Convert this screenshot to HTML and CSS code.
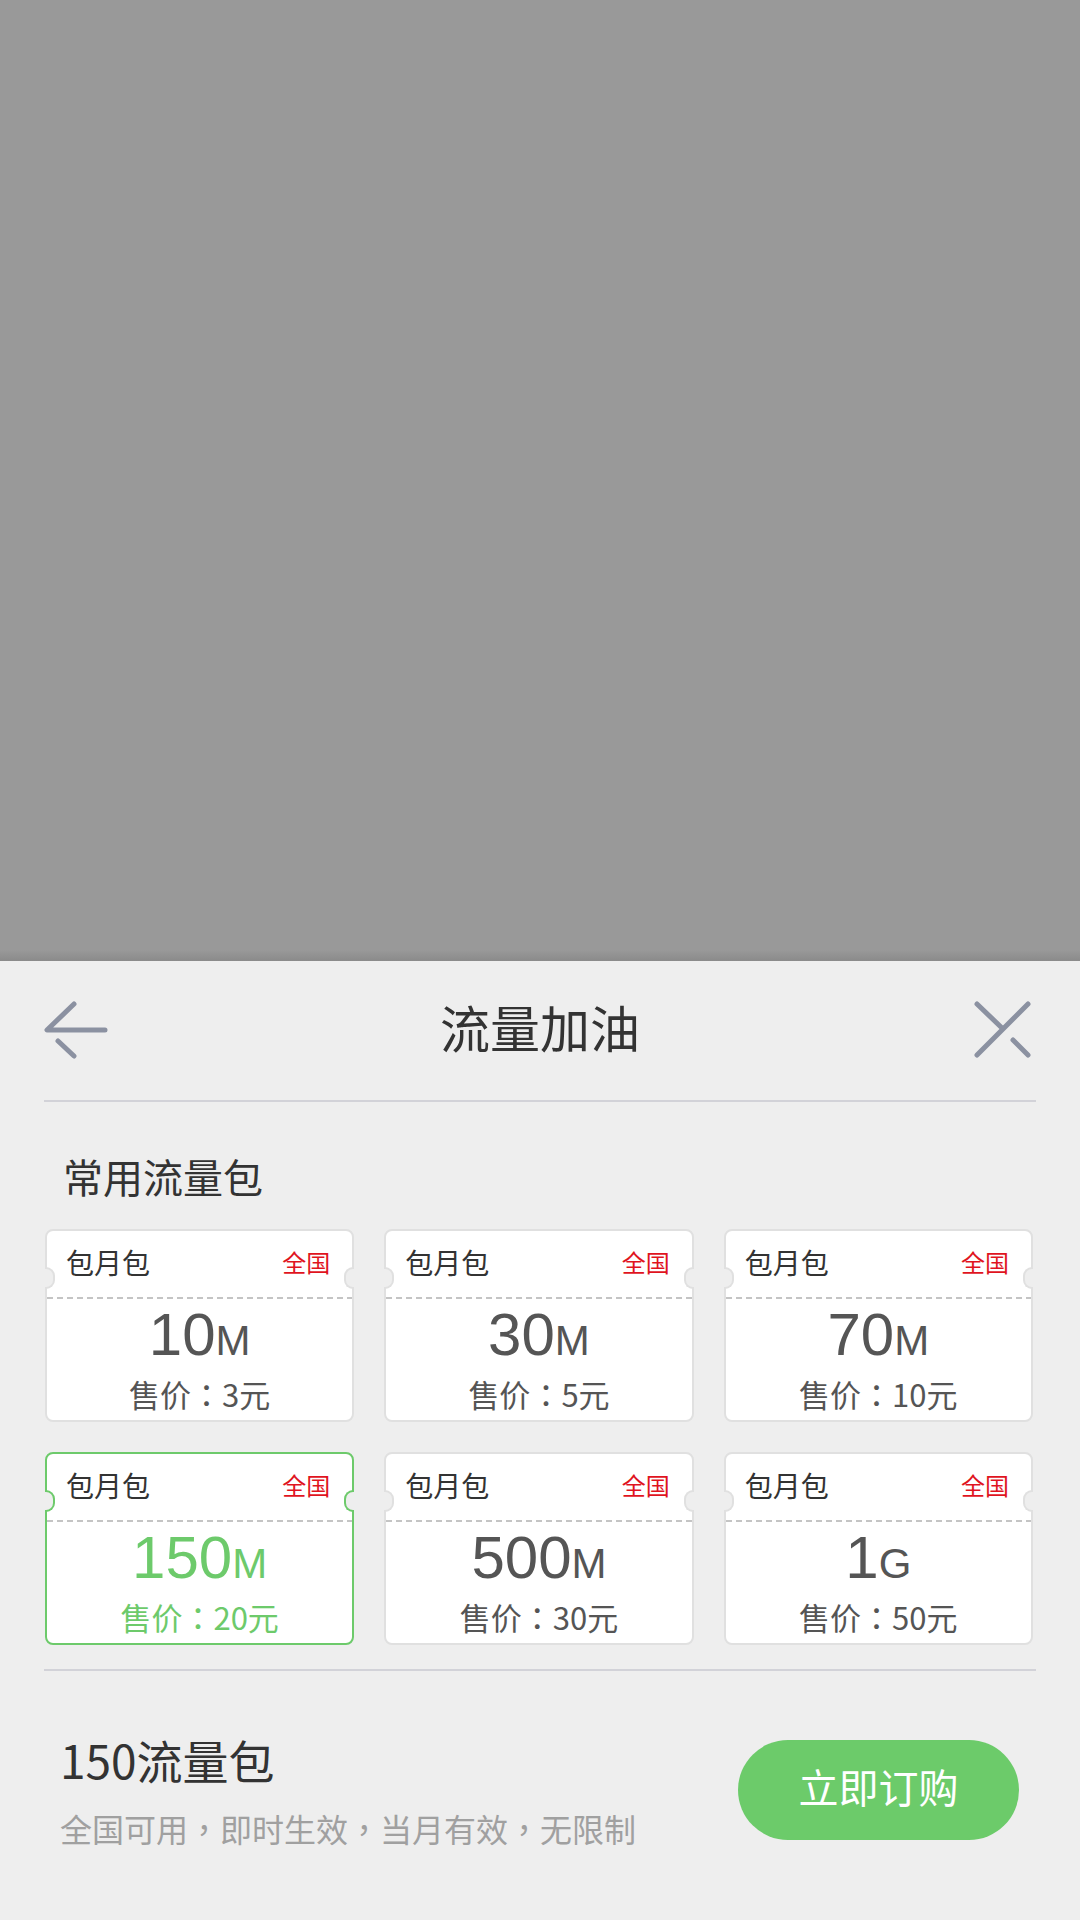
FILE: index.html
```html
<!DOCTYPE html>
<html lang="zh-CN">
<head>
<meta charset="utf-8">
<title>流量加油</title>
<link rel="stylesheet" href="styles.css">
</head>
<body>
<div class="overlay"></div>
<div class="panel">
  <div class="header">
    <svg class="icon" viewBox="0 0 64 64" width="64" height="64">
      <path d="M30 6 L3 32 L61 32 M14 43 L30 58" fill="none" stroke="#8b91a1" stroke-width="5" stroke-linecap="round" stroke-linejoin="round"/>
    </svg>
    <div class="title">流量加油</div>
    <svg class="icon" viewBox="0 0 64 64" width="64" height="64">
      <path d="M5 6 L30 30 M56 6 L5 57 M41 42 L56 57" fill="none" stroke="#8b91a1" stroke-width="5" stroke-linecap="round" stroke-linejoin="round"/>
    </svg>
  </div>
  <div class="section-title">常用流量包</div>
  <div class="grid">
    <div class="card">
      <div class="card-top"><span class="type">包月包</span><span class="area">全国</span></div>
      <div class="dash"></div>
      <div class="amount"><span class="num">10</span><span class="unit">M</span></div>
      <div class="price">售价<span class="punct" lang="zh-TW">：</span>3元</div>
    </div>
    <div class="card">
      <div class="card-top"><span class="type">包月包</span><span class="area">全国</span></div>
      <div class="dash"></div>
      <div class="amount"><span class="num">30</span><span class="unit">M</span></div>
      <div class="price">售价<span class="punct" lang="zh-TW">：</span>5元</div>
    </div>
    <div class="card">
      <div class="card-top"><span class="type">包月包</span><span class="area">全国</span></div>
      <div class="dash"></div>
      <div class="amount"><span class="num">70</span><span class="unit">M</span></div>
      <div class="price">售价<span class="punct" lang="zh-TW">：</span>10元</div>
    </div>
    <div class="card selected">
      <div class="card-top"><span class="type">包月包</span><span class="area">全国</span></div>
      <div class="dash"></div>
      <div class="amount"><span class="num">150</span><span class="unit">M</span></div>
      <div class="price">售价<span class="punct" lang="zh-TW">：</span>20元</div>
    </div>
    <div class="card">
      <div class="card-top"><span class="type">包月包</span><span class="area">全国</span></div>
      <div class="dash"></div>
      <div class="amount"><span class="num">500</span><span class="unit">M</span></div>
      <div class="price">售价<span class="punct" lang="zh-TW">：</span>30元</div>
    </div>
    <div class="card">
      <div class="card-top"><span class="type">包月包</span><span class="area">全国</span></div>
      <div class="dash"></div>
      <div class="amount"><span class="num">1</span><span class="unit">G</span></div>
      <div class="price">售价<span class="punct" lang="zh-TW">：</span>50元</div>
    </div>
  </div>
  <div class="divider"></div>
  <div class="summary">
    <div class="summary-text">
      <div class="summary-title">150流量包</div>
      <div class="summary-desc">全国可用<span class="punct" lang="zh-TW">，</span>即时生效<span class="punct" lang="zh-TW">，</span>当月有效<span class="punct" lang="zh-TW">，</span>无限制</div>
    </div>
    <div class="buy-btn">立即订购</div>
  </div>
</div>
</body>
</html>
```

FILE: styles.css
```css
* {
  box-sizing: border-box;
}

html, body {
  margin: 0;
  padding: 0;
}

body {
  width: 1080px;
  height: 1920px;
  overflow: hidden;
  background: #eeeeee;
  font-family: "Noto Sans CJK SC", "Noto Sans", sans-serif;
  color: #333;
}

.punct {
  font-family: "Noto Sans CJK TC", "Noto Sans CJK SC", sans-serif;
  font-feature-settings: "locl" 1;
}

.overlay {
  height: 961px;
  background: linear-gradient(to bottom, #999999 0, #999999 950px, #8a8a8a 961px);
}

.panel {
  height: 959px;
  background: #eeeeee;
  padding: 0 44px;
}

.header {
  height: 141px;
  display: flex;
  align-items: center;
  border-bottom: 2px solid #d2d2d8;
  padding-bottom: 2px;
}

.icon {
  flex: 0 0 64px;
  display: block;
}

.title {
  flex: 1;
  text-align: center;
  font-size: 50px;
  line-height: 60px;
  padding-bottom: 8px;
  color: #333;
}

.section-title {
  margin-top: 54px;
  padding-left: 19px;
  font-size: 40px;
  line-height: 40px;
  color: #333;
}

.grid {
  margin: 33px 3px 0 1px;
  display: grid;
  grid-template-columns: repeat(3, 1fr);
  column-gap: 30px;
  row-gap: 30px;
}

.card {
  position: relative;
  height: 193px;
  background: #fff;
  border: 2px solid #e0e0e0;
  border-radius: 8px;
}

.card::before,
.card::after {
  content: "";
  position: absolute;
  top: 36px;
  width: 8px;
  height: 18px;
  background: #eeeeee;
  border: 2px solid #e0e0e0;
}

.card::before {
  left: -2px;
  border-left: none;
  border-radius: 0 9px 9px 0;
}

.card::after {
  right: -2px;
  border-right: none;
  border-radius: 9px 0 0 9px;
}

.card-top {
  height: 66px;
  display: flex;
  align-items: center;
  justify-content: space-between;
  padding: 0 22px 4px 19px;
}

.type {
  font-size: 28px;
  line-height: 34px;
  color: #333;
}

.area {
  font-size: 24px;
  line-height: 30px;
  color: #e0141e;
}

.dash {
  height: 2px;
  background: repeating-linear-gradient(to right, #c4c4c4 0, #c4c4c4 6px, transparent 6px, transparent 10px);
}

.amount {
  height: 64px;
  margin-top: 4px;
  text-align: center;
  font-family: "Liberation Sans", Arial, sans-serif;
  font-size: 60px;
  line-height: 64px;
  color: #555;
}

.num {
  font-size: 60px;
}

.unit {
  font-size: 42px;
  line-height: 1;
}

.price {
  margin-top: 10px;
  text-align: center;
  font-size: 31px;
  line-height: 34px;
  color: #555;
}

.card.selected {
  border-color: #6dca6b;
}

.card.selected::before,
.card.selected::after {
  border-color: #6dca6b;
}

.card.selected .amount,
.card.selected .price {
  color: #6dca6b;
}

.divider {
  margin-top: 24px;
  height: 2px;
  background: #d2d2d8;
}

.summary {
  display: flex;
  justify-content: space-between;
  align-items: flex-start;
  padding: 63px 17px 0 16px;
}

.summary-title {
  font-size: 46px;
  line-height: 50px;
  color: #333;
}

.summary-desc {
  margin-top: 24px;
  font-size: 32px;
  line-height: 40px;
  color: #a0a0a0;
}

.buy-btn {
  margin-top: 6px;
  width: 281px;
  height: 100px;
  border-radius: 50px;
  background: #6ccb6a;
  color: #fff;
  font-size: 40px;
  padding-bottom: 8px;
  display: flex;
  align-items: center;
  justify-content: center;
}
```
